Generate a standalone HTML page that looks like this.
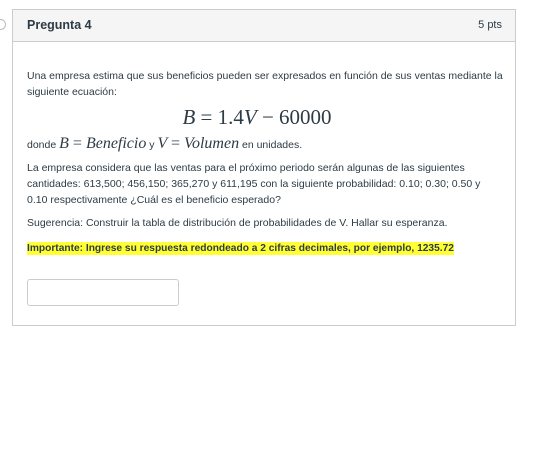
<!DOCTYPE html>
<html><head><style>
body{margin:0;width:539px;height:456px;background:#fff;font-family:"Liberation Sans",sans-serif;color:#2d3b45;position:relative;overflow:hidden}
.box{position:absolute;left:12px;top:9px;width:502px;height:315px;border:1px solid #c7cdd1}
.hdr{height:31px;background:#f5f5f5;border-bottom:1px solid #c7cdd1;position:relative}
.hdr .t{position:absolute;left:14px;top:8px;font-size:12.5px;font-weight:bold;color:#2d3b45}
.hdr .p{position:absolute;right:13px;top:9px;font-size:11px;color:#2d3b45}
.tx{position:absolute;left:14px;font-size:10.5px;line-height:16px;width:476px}
.m{font-family:"Liberation Serif",serif;font-style:italic}
.circ{position:absolute;left:-5px;top:19px;width:9px;height:9px;border:1px solid #bbb;border-radius:50%}
</style></head><body>
<div class="circ"></div>
<div class="box">
<div class="hdr"><span class="t">Pregunta 4</span><span class="p">5 pts</span></div>
<div class="tx" style="top:58px">Una empresa estima que sus beneficios pueden ser expresados en función de sus ventas mediante la siguiente ecuación:</div>
<div class="tx" style="top:96px;text-align:center;font-family:'Liberation Serif',serif;font-size:21px;line-height:22px;left:0;width:488px"><i>B</i> = 1.4<i>V</i> − 60000</div>
<div class="tx" style="top:126px">donde <span class="m" style="font-size:16px">B <span style="font-style:normal">=</span> Beneficio</span> y <span class="m" style="font-size:16px">V <span style="font-style:normal">=</span> Volumen</span> en unidades.</div>
<div class="tx" style="top:150px;width:466px">La empresa considera que las ventas para el próximo periodo serán algunas de las siguientes cantidades: 613,500; 456,150; 365,270 y 611,195 con la siguiente probabilidad: 0.10; 0.30; 0.50 y 0.10 respectivamente ¿Cuál es el beneficio esperado?</div>
<div class="tx" style="top:205px">Sugerencia: Construir la tabla de distribución de probabilidades de V. Hallar su esperanza.</div>
<div class="tx" style="top:230px;width:490px"><span style="background:#ffff33;font-weight:bold;color:#2d3b45;font-size:10.2px;padding:1px 0">Importante: Ingrese su respuesta redondeado a 2 cifras decimales, por ejemplo, 1235.72</span></div>
<div style="position:absolute;left:14px;top:269px;width:150px;height:25px;border:1px solid #c7cdd1;border-radius:3px"></div>
</div>
</body></html>
